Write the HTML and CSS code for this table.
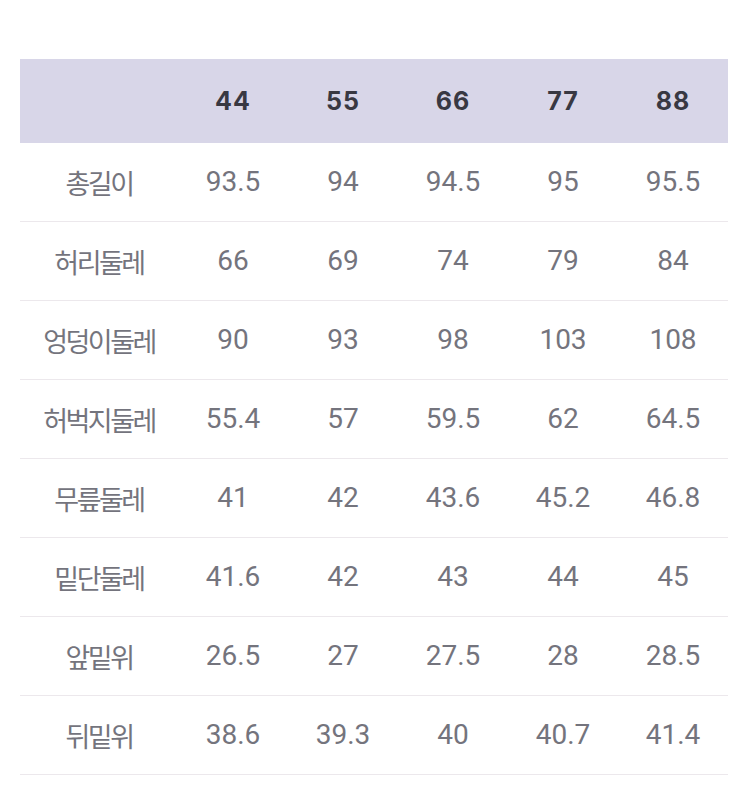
FILE: index.html
```html
<!DOCTYPE html>
<html lang="ko">
<head>
<meta charset="utf-8">
<title>사이즈표</title>
<link rel="stylesheet" href="styles.css">
</head>
<body>
<div class="page">
  <div class="size-table">
    <div class="row head">
      <div class="cell label"></div>
      <div class="cell">44</div>
      <div class="cell">55</div>
      <div class="cell">66</div>
      <div class="cell">77</div>
      <div class="cell">88</div>
    </div>
    <div class="row">
      <div class="cell label">총길이</div>
      <div class="cell">93.5</div><div class="cell">94</div><div class="cell">94.5</div><div class="cell">95</div><div class="cell">95.5</div>
    </div>
    <div class="row">
      <div class="cell label">허리둘레</div>
      <div class="cell">66</div><div class="cell">69</div><div class="cell">74</div><div class="cell">79</div><div class="cell">84</div>
    </div>
    <div class="row">
      <div class="cell label">엉덩이둘레</div>
      <div class="cell">90</div><div class="cell">93</div><div class="cell">98</div><div class="cell">103</div><div class="cell">108</div>
    </div>
    <div class="row">
      <div class="cell label">허벅지둘레</div>
      <div class="cell">55.4</div><div class="cell">57</div><div class="cell">59.5</div><div class="cell">62</div><div class="cell">64.5</div>
    </div>
    <div class="row">
      <div class="cell label">무릎둘레</div>
      <div class="cell">41</div><div class="cell">42</div><div class="cell">43.6</div><div class="cell">45.2</div><div class="cell">46.8</div>
    </div>
    <div class="row">
      <div class="cell label">밑단둘레</div>
      <div class="cell">41.6</div><div class="cell">42</div><div class="cell">43</div><div class="cell">44</div><div class="cell">45</div>
    </div>
    <div class="row">
      <div class="cell label">앞밑위</div>
      <div class="cell">26.5</div><div class="cell">27</div><div class="cell">27.5</div><div class="cell">28</div><div class="cell">28.5</div>
    </div>
    <div class="row">
      <div class="cell label">뒤밑위</div>
      <div class="cell">38.6</div><div class="cell">39.3</div><div class="cell">40</div><div class="cell">40.7</div><div class="cell">41.4</div>
    </div>
  </div>
</div>
</body>
</html>
```
FILE: styles.css
```css
html, body {
  margin: 0;
  padding: 0;
  background: #ffffff;
}

.page {
  padding: 59px 22px 0 20px;
}

.size-table {
  width: 708px;
  display: flex;
  flex-direction: column;
}

.row {
  display: grid;
  grid-template-columns: 158px repeat(5, 110px);
  height: 78px;
  border-bottom: 1px solid #ece8ec;
  align-items: center;
}

.row.head {
  height: 84px;
  background: #d8d6e8;
  border-bottom: none;
}

.cell {
  text-align: center;
  font-family: Roboto, "Liberation Sans", sans-serif;
  font-size: 28px;
  color: #74747d;
  line-height: 1;
}

.cell.label {
  font-family: "Noto Sans CJK KR", "Noto Sans", sans-serif;
  font-size: 27px;
  letter-spacing: -2.5px;
  color: #74747d;
}

.head .cell {
  font-family: Inter, "Liberation Sans", sans-serif;
  font-weight: 700;
  font-size: 25px;
  letter-spacing: 1px;
  color: #383842;
}
```
